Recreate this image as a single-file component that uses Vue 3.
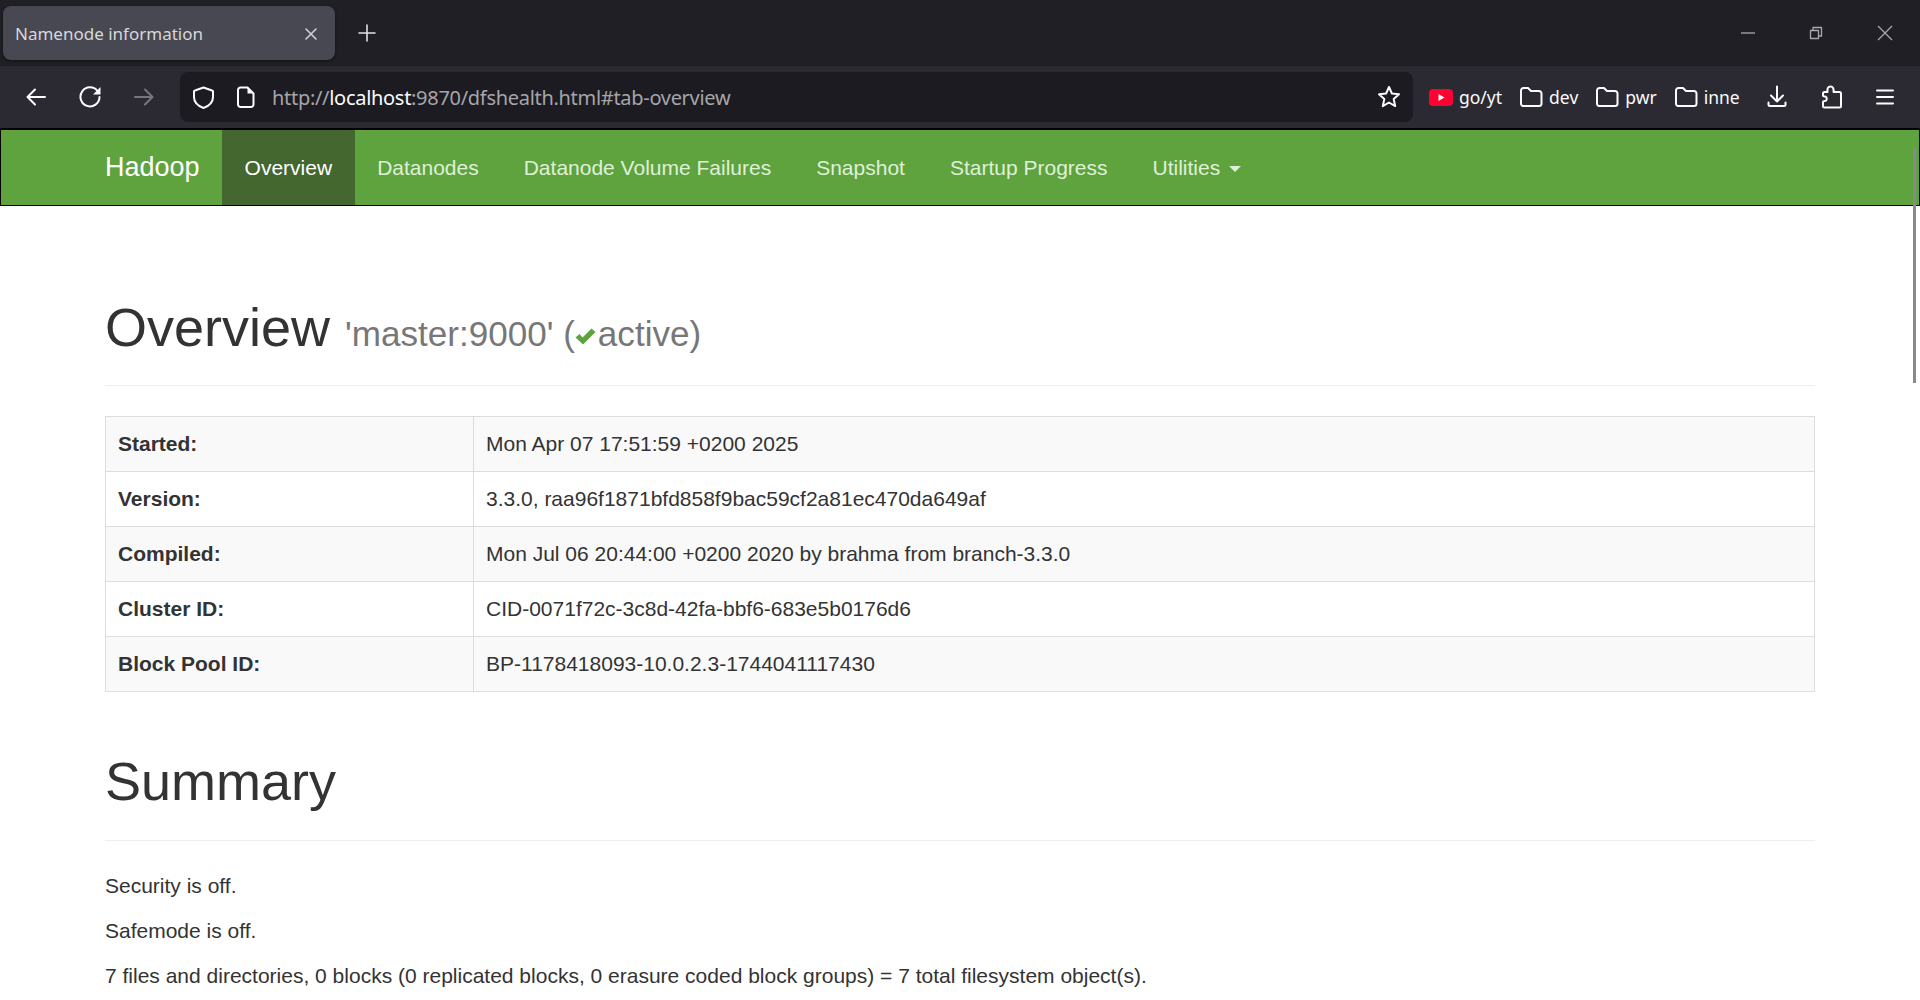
<template>
  <div class="page">
    <header class="chrome">
      <div class="tabbar">
        <div class="tab">
          <span class="tab__title">Namenode information</span>
          <svg class="tab__close" width="14" height="14" viewBox="0 0 14 14"><path d="M2 2l10 10M12 2L2 12" /></svg>
        </div>
        <svg class="newtab" width="20" height="20" viewBox="0 0 20 20"><path d="M10 2v16M2 10h16" /></svg>
        <div class="winctl">
          <svg width="16" height="16" viewBox="0 0 16 16"><path d="M1 8h14" /></svg>
          <svg width="16" height="16" viewBox="0 0 16 16"><path d="M2.500 5.500h8v8h-8zM5 5.500V2.500h8.500v8.500h-3" /></svg>
          <svg width="18" height="18" viewBox="0 0 18 18"><path d="M2 2l14 14M16 2L2 16" /></svg>
        </div>
      </div>
      <div class="toolbar">
        <svg class="tool tool--first" width="22" height="22" viewBox="0 0 22 22"><path d="M20 11H3M10 3.500L2.500 11l7.500 7.500" /></svg>
        <svg class="tool" width="22" height="22" viewBox="0 0 22 22"><path d="M18.500 5A9.500 9.500 0 1 0 20.500 11" /><path class="solid" d="M21.500 1v7.500H14z" /></svg>
        <svg class="tool tool--off" width="22" height="22" viewBox="0 0 22 22"><path d="M2 11h17M12 3.500l7.500 7.500-7.500 7.500" /></svg>
        <div class="urlbar">
          <svg class="urlbar__shield" width="23" height="23" viewBox="0 0 23 23"><path d="M11.500 1.500L20 4.500a1 1 0 0 1 1 1V11c0 5-4 9-9.500 11C6 20 2 16 2 11V5.500a1 1 0 0 1 1-1z" /></svg>
          <svg class="urlbar__page" width="18" height="22" viewBox="0 0 18 22"><path d="M3.500 1.500h7l6 6v11a2.500 2.500 0 0 1-2.500 2.500H3.500A2.500 2.500 0 0 1 1 18.500V4a2.500 2.500 0 0 1 2.500-2.500z" /><path class="solid" d="M10.500 1.500l6 6h-6z" /></svg>
          <span class="urlbar__text">http://<b>localhost</b>:9870/dfshealth.html#tab-overview</span>
          <svg class="urlbar__star" width="24" height="24" viewBox="0 0 24 24"><path d="M12 2l2.900 6.500 7.100.800-5.300 4.800 1.500 7-6.200-3.600-6.200 3.600 1.500-7L2 9.300l7.100-.800z" /></svg>
        </div>
        <div class="bookmarks">
          <div class="bookmark">
            <svg width="24" height="17" viewBox="0 0 24 17"><rect width="24" height="17" rx="4" fill="#ff0033" /><path class="solid" d="M9.500 5l6 3.500-6 3.500z" /></svg>
            <span>go/yt</span>
          </div>
          <div v-for="name in folders" :key="name" class="bookmark">
            <svg class="folder" width="23" height="20" viewBox="0 0 23 20"><path d="M1 3.500a2.500 2.500 0 0 1 2.500-2.500h4.500l3 3h8a2.500 2.500 0 0 1 2.500 2.500v10a2.500 2.500 0 0 1-2.500 2.500h-15A2.500 2.500 0 0 1 1 16.500z" /></svg>
            <span>{{ name }}</span>
          </div>
        </div>
        <svg class="tool tool--dl" width="20" height="24" viewBox="0 0 20 24"><path d="M10 1.500v15M4 10.500l6 6 6-6M1.500 17.500v2a1.500 1.500 0 0 0 1.500 1.500h14a1.500 1.500 0 0 0 1.500-1.500v-2" /></svg>
        <svg class="tool tool--end" width="21" height="24" viewBox="0 0 21 24"><path d="M9.500 1.500c2.500 0 3.500 2 3 5.500h6a1.500 1.500 0 0 1 1.500 1.500V21a1.500 1.500 0 0 1-1.500 1.500h-15A1.500 1.500 0 0 1 2 21v-4c0-1 .5-1 1.500-1 3 .5 3-5 0-4.500-1 0-1.500 0-1.500-1V8.500A1.500 1.500 0 0 1 3.500 7h3c-.500-3.500.500-5.500 3-5.500z" /></svg>
        <svg class="tool tool--end" width="18" height="16" viewBox="0 0 18 16"><path d="M1 1.500h16M1 8h16M1 14.500h16" /></svg>
      </div>
    </header>

    <div class="separator"></div>
    <nav class="navbar">
      <div class="navbar__inner">
        <a class="brand">Hadoop</a>
        <a
          v-for="item in navItems"
          :key="item"
          class="navlink"
          :class="{ 'navlink--active': item === 'Overview' }"
        >
          {{ item }}<span v-if="item === 'Utilities'" class="caret"></span>
        </a>
      </div>
    </nav>

    <main class="container">
      <div class="page-header page-header--first">
        <h1>Overview <small>'master:9000' (<svg class="check" width="21" height="17" viewBox="0 0 21 17"><path d="M0.500 9.500l4-3.500 3 3.500L16.500 0.500 20.500 4 8 16.500z" /></svg>active)</small></h1>
      </div>

      <table class="info">
        <tbody>
          <tr v-for="row in rows" :key="row[0]">
            <th>{{ row[0] }}</th>
            <td>{{ row[1] }}</td>
          </tr>
        </tbody>
      </table>

      <div class="page-header">
        <h1>Summary</h1>
      </div>
      <p>Security is off.</p>
      <p>Safemode is off.</p>
      <p>7 files and directories, 0 blocks (0 replicated blocks, 0 erasure coded block groups) = 7 total filesystem object(s).</p>
    </main>

    <div class="scrollthumb"></div>
  </div>
</template>

<script setup>
const folders = ['dev', 'pwr', 'inne']
const navItems = ['Overview', 'Datanodes', 'Datanode Volume Failures', 'Snapshot', 'Startup Progress', 'Utilities']
const rows = [
  ['Started:', 'Mon Apr 07 17:51:59 +0200 2025'],
  ['Version:', '3.3.0, raa96f1871bfd858f9bac59cf2a81ec470da649af'],
  ['Compiled:', 'Mon Jul 06 20:44:00 +0200 2020 by brahma from branch-3.3.0'],
  ['Cluster ID:', 'CID-0071f72c-3c8d-42fa-bbf6-683e5b0176d6'],
  ['Block Pool ID:', 'BP-1178418093-10.0.2.3-1744041117430']
]
</script>

<style>
html,
body {
  margin: 0;
  height: 100%;
  overflow: hidden;
  background: #fff;
}
</style>

<style scoped>
.page {
  position: relative;
  height: 1000px;
  overflow: hidden;
  font-family: 'Liberation Sans', Arial, sans-serif;
  font-size: 21px;
  line-height: 30px;
  color: #333;
}

.chrome {
  font-family: 'Noto Sans', sans-serif;
}

svg path {
  fill: none;
  stroke: #fbfbfe;
  stroke-width: 2;
  stroke-linecap: round;
  stroke-linejoin: round;
}

svg path.solid {
  fill: #fbfbfe;
  stroke: none;
}

.tabbar {
  display: flex;
  align-items: center;
  height: 66px;
  box-sizing: border-box;
  padding: 6px 0 6px 3px;
  background: #1f1f25;
}

.tab {
  display: flex;
  align-items: center;
  justify-content: space-between;
  width: 332px;
  height: 54px;
  box-sizing: border-box;
  padding: 1px 17px 0 12px;
  border-radius: 8px;
  background: #484852;
  box-shadow: 0 1px 3px rgba(0, 0, 0, 0.5);
  color: #d7d7db;
  font-size: 17px;
  white-space: nowrap;
}

.tab__close path {
  stroke: #cfcfd4;
  stroke-width: 1.6;
}

.newtab {
  margin-left: 22px;
}

.newtab path {
  stroke: #e0e0e3;
  stroke-width: 1.6;
}

.winctl {
  display: flex;
  align-items: center;
  gap: 52px;
  margin-left: auto;
  padding-right: 26px;
}

.winctl path {
  stroke: #a9a9ae;
  stroke-width: 1.3;
  stroke-linecap: butt;
}

.toolbar {
  display: flex;
  align-items: center;
  height: 62px;
  box-sizing: border-box;
  padding: 0 27px 0 25px;
  background: #2b2a33;
}

.tool {
  flex: none;
  margin-right: 32px;
}

.tool--off path {
  stroke: #77767d;
}

.tool--dl {
  margin: 0 0 0 27px;
}

.tool--end {
  margin: 0 0 0 34px;
}

.urlbar {
  display: flex;
  align-items: center;
  flex: none;
  width: 1233px;
  height: 50px;
  box-sizing: border-box;
  margin-left: -7px;
  padding: 0 12px;
  border-radius: 8px;
  background: #1c1b22;
}

.urlbar__shield {
  margin-right: 22px;
}

.urlbar__page {
  margin-right: 17px;
}

.urlbar__text {
  padding-top: 1px;
  color: #a5a5a9;
  font-size: 20px;
  letter-spacing: -0.3px;
  white-space: nowrap;
}

.urlbar__text b {
  color: #fbfbfe;
  font-weight: 400;
}

.urlbar__star {
  margin-left: auto;
}

.bookmarks {
  display: flex;
  align-items: center;
  gap: 18px;
  margin-left: 16px;
  color: #fbfbfe;
  font-size: 17.500px;
}

.bookmark {
  display: flex;
  align-items: center;
  gap: 6px;
}

.separator {
  height: 2px;
  background: #000;
}

.navbar {
  box-sizing: border-box;
  height: 76px;
  border: 1px solid #000;
  border-top: 0;
  background: #5fa33e;
}

.navbar__inner {
  display: flex;
  height: 75px;
  width: 1710px;
  margin: 0 auto;
}

.brand {
  padding: 0 22.500px 0 0;
  color: #fff;
  font-size: 27px;
  line-height: 75px;
}

.navlink {
  padding: 0 22.500px;
  color: #dff0d8;
  line-height: 75px;
}

.navlink--active {
  background: #44662f;
  color: #fff;
}

.caret {
  display: inline-block;
  width: 0;
  height: 0;
  margin-left: 9px;
  vertical-align: middle;
  border-top: 6px solid;
  border-right: 6px solid transparent;
  border-left: 6px solid transparent;
}

.container {
  width: 1710px;
  margin: 0 auto;
}

.page-header {
  margin-top: 60px;
  margin-bottom: 30px;
  padding-bottom: 13.500px;
  border-bottom: 1px solid #eee;
}

.page-header--first {
  margin-top: 92px;
}

.page-header--first h1 {
  margin-bottom: 14px;
}

h1 {
  margin: 0 0 15px;
  font-size: 54px;
  font-weight: 500;
  line-height: 59.400px;
}

small {
  color: #777;
  font-size: 35.100px;
  font-weight: 400;
  line-height: 1;
}

.check {
  margin-right: 2px;
  vertical-align: 1px;
}

.check path {
  fill: #5fa33e;
  stroke: none;
}

.info {
  width: 100%;
  border-collapse: collapse;
  border: 1px solid #ddd;
}

.info th,
.info td {
  padding: 12px;
  border: 1px solid #ddd;
  text-align: left;
}

.info th {
  width: 343px;
}

.info tr:nth-child(odd) {
  background: #f9f9f9;
}

p {
  margin: 0 0 15px;
}

.scrollthumb {
  position: absolute;
  top: 147px;
  right: 4px;
  width: 3px;
  height: 236px;
  background: #8a8a8e;
}
</style>
